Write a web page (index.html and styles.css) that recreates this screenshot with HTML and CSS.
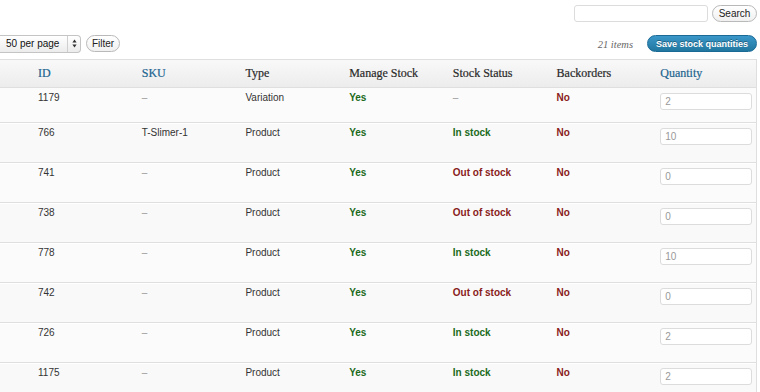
FILE: index.html
```html
<!DOCTYPE html>
<html>
<head>
<meta charset="utf-8">
<link rel="stylesheet" href="styles.css">
</head>
<body>
<div class="page">
  <div class="searchbar">
    <input class="search-input" type="text">
    <button class="pill-btn search-btn">Search</button>
  </div>
  <div class="tablenav">
    <div class="left-controls">
      <div class="select">
        <span class="select-label">50 per page</span>
        <span class="select-arrows">
          <svg width="5" height="9" viewBox="0 0 5 9"><path d="M2.5 0.5L4.6 3.6H0.4Z" fill="#333"/><path d="M2.5 8.5L4.6 5.4H0.4Z" fill="#333"/></svg>
        </span>
      </div>
      <button class="pill-btn filter-btn">Filter</button>
    </div>
    <div class="right-controls">
      <span class="count">21 items</span>
      <button class="save-btn">Save stock quantities</button>
    </div>
  </div>
  <div class="table">
    <div class="row head">
      <div class="cell"></div>
      <div class="cell th sortable">ID</div>
      <div class="cell th sortable">SKU</div>
      <div class="cell th">Type</div>
      <div class="cell th">Manage Stock</div>
      <div class="cell th">Stock Status</div>
      <div class="cell th">Backorders</div>
      <div class="cell th sortable">Quantity</div>
    </div>
    <div class="row body first light">
      <div class="cell"></div>
      <div class="cell">1179</div>
      <div class="cell dash">–</div>
      <div class="cell">Variation</div>
      <div class="cell yes">Yes</div>
      <div class="cell dash">–</div>
      <div class="cell no">No</div>
      <div class="cell"><input class="qty" type="text" value="2"></div>
    </div>
    <div class="row body">
      <div class="cell"></div>
      <div class="cell">766</div>
      <div class="cell">T-Slimer-1</div>
      <div class="cell">Product</div>
      <div class="cell yes">Yes</div>
      <div class="cell yes">In stock</div>
      <div class="cell no">No</div>
      <div class="cell"><input class="qty" type="text" value="10"></div>
    </div>
    <div class="row body light">
      <div class="cell"></div>
      <div class="cell">741</div>
      <div class="cell dash">–</div>
      <div class="cell">Product</div>
      <div class="cell yes">Yes</div>
      <div class="cell no">Out of stock</div>
      <div class="cell no">No</div>
      <div class="cell"><input class="qty" type="text" value="0"></div>
    </div>
    <div class="row body">
      <div class="cell"></div>
      <div class="cell">738</div>
      <div class="cell dash">–</div>
      <div class="cell">Product</div>
      <div class="cell yes">Yes</div>
      <div class="cell no">Out of stock</div>
      <div class="cell no">No</div>
      <div class="cell"><input class="qty" type="text" value="0"></div>
    </div>
    <div class="row body light">
      <div class="cell"></div>
      <div class="cell">778</div>
      <div class="cell dash">–</div>
      <div class="cell">Product</div>
      <div class="cell yes">Yes</div>
      <div class="cell yes">In stock</div>
      <div class="cell no">No</div>
      <div class="cell"><input class="qty" type="text" value="10"></div>
    </div>
    <div class="row body">
      <div class="cell"></div>
      <div class="cell">742</div>
      <div class="cell dash">–</div>
      <div class="cell">Product</div>
      <div class="cell yes">Yes</div>
      <div class="cell no">Out of stock</div>
      <div class="cell no">No</div>
      <div class="cell"><input class="qty" type="text" value="0"></div>
    </div>
    <div class="row body light">
      <div class="cell"></div>
      <div class="cell">726</div>
      <div class="cell dash">–</div>
      <div class="cell">Product</div>
      <div class="cell yes">Yes</div>
      <div class="cell yes">In stock</div>
      <div class="cell no">No</div>
      <div class="cell"><input class="qty" type="text" value="2"></div>
    </div>
    <div class="row body">
      <div class="cell"></div>
      <div class="cell">1175</div>
      <div class="cell dash">–</div>
      <div class="cell">Product</div>
      <div class="cell yes">Yes</div>
      <div class="cell yes">In stock</div>
      <div class="cell no">No</div>
      <div class="cell"><input class="qty" type="text" value="2"></div>
    </div>
  </div>
</div>
</body>
</html>
```
FILE: styles.css
```css
* { box-sizing: border-box; }
html, body { margin: 0; padding: 0; background: #fff; }
body {
  font-family: "Liberation Sans", Arial, sans-serif;
  font-size: 10px;
  color: #333;
  overflow: hidden;
}
.page { width: 757px; }

.searchbar {
  display: flex;
  justify-content: flex-end;
  align-items: center;
  gap: 4px;
  padding-top: 5px;
  height: 22px;
}
.search-input {
  width: 134px;
  height: 17px;
  border: 1px solid #dcdcdc;
  border-radius: 3px;
  background: #fff;
  margin: 0;
  padding: 0 4px;
}
.pill-btn {
  font-family: "Liberation Sans", Arial, sans-serif;
  font-size: 10px;
  color: #222;
  height: 17px;
  border: 1px solid #b9b9b9;
  border-radius: 9px;
  background: linear-gradient(#ffffff, #f0f0f0);
  padding: 0 5px;
  margin: 0;
  line-height: 15px;
}
.search-btn { width: 45px; }

.tablenav {
  display: flex;
  justify-content: space-between;
  align-items: center;
  margin-top: 13px;
  height: 17px;
}
.left-controls { display: flex; align-items: center; gap: 5px; }
.select {
  display: flex;
  align-items: stretch;
  width: 81px;
  height: 18px;
  border: 1px solid #c4c4c4;
  border-left: none;
  border-radius: 0 4px 4px 0;
  background: linear-gradient(#ffffff, #ececec);
}
.select-label {
  flex: 1;
  padding-left: 6px;
  line-height: 16px;
  color: #111;
}
.select-arrows {
  width: 13px;
  border-left: 1px solid #cfcfcf;
  display: flex;
  align-items: center;
  justify-content: center;
}
.filter-btn { width: 34px; padding: 0; }

.right-controls { display: flex; align-items: center; gap: 14px; }
.count {
  font-family: "Liberation Serif", Georgia, serif;
  font-style: italic;
  font-size: 10.5px;
  color: #666;
  padding-top: 2px;
}
.save-btn {
  font-family: "Liberation Sans", Arial, sans-serif;
  font-size: 9px;
  font-weight: bold;
  color: #fff;
  height: 17px;
  width: 110px;
  padding: 0;
  margin: 0;
  border: 1px solid #1b6a96;
  border-radius: 9px;
  background: linear-gradient(#3a97c9, #21779f);
  text-shadow: 0 -1px 0 rgba(0,0,0,0.35);
}

.table {
  margin-top: 7px;
  border-right: 1px solid #dfdfdf;
}
.row {
  display: grid;
  grid-template-columns: 30px repeat(7, minmax(0, 1fr));
}
.row.head {
  height: 29px;
  border-top: 1px solid #dfdfdf;
  border-bottom: 1px solid #dfdfdf;
  background: linear-gradient(#f9f9f9, #ececec);
  align-items: center;
}
.th {
  font-family: "Liberation Serif", Georgia, serif;
  font-size: 12px;
  color: #2a2a2a;
  padding-left: 8px;
  -webkit-text-stroke: 0.2px currentColor;
}
.th.sortable { color: #21648f; }

.row.body {
  height: 40px;
  border-top: 1px solid #dfdfdf;
  box-shadow: inset 0 1px 0 #fff;
  background: #f9f9f9;
}
.row.body.light { background: #fbfbfb; }
.row.body.first {
  height: 34px;
  border-top: none;
  box-shadow: none;
}
.row.body .cell {
  padding: 4px 8px 0;
  line-height: 12px;
  overflow: visible;
}
.dash { color: #999; }
.yes { color: #1c6b1c; font-weight: bold; }
.no { color: #8a1c1c; font-weight: bold; }
.qty {
  display: block;
  width: 92px;
  height: 17px;
  margin: 1px 0 0;
  border: 1px solid #dcdcdc;
  border-radius: 3px;
  background: #fff;
  padding: 0 4px;
  font-family: "Liberation Sans", Arial, sans-serif;
  font-size: 10px;
  color: #999;
}
```
